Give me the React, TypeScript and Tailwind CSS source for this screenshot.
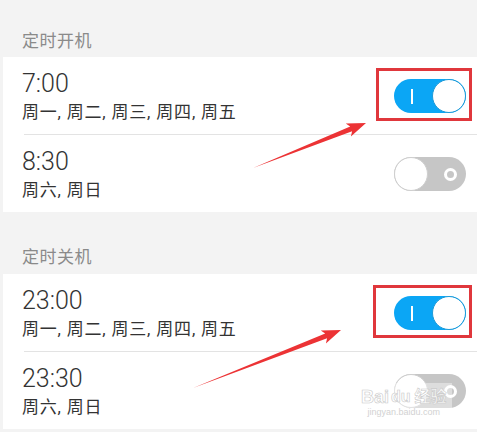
import React from "react";

const FONT = { fontFamily: '"Roboto", "Noto Sans CJK SC", sans-serif' };

function ToggleOn() {
  return (
    <div className="relative h-[34px] w-[72px] rounded-full bg-[#0ba6f5]">
      <div className="absolute left-[17px] top-[10px] h-[15px] w-[2px] bg-white" />
      <div className="absolute right-0 top-0 h-[34px] w-[34px] rounded-full border border-[#1c9ad8] bg-white" />
    </div>
  );
}

function ToggleOff() {
  return (
    <div className="relative h-[34px] w-[72px] rounded-full bg-[#c6c6c6]">
      <div className="absolute right-[9px] top-[11px] h-[13px] w-[13px] rounded-full border-[3px] border-white" />
      <div className="absolute left-0 top-0 h-[34px] w-[34px] rounded-full border border-[#cfcfcf] bg-white" />
    </div>
  );
}

function Row({ time, days, on, divider }: { time: string; days: string; on: boolean; divider?: boolean }) {
  return (
    <div className="flex flex-col">
      <div className="flex h-[77px] items-center pl-[19px] pr-[11px]">
        <div className="flex flex-1 flex-col">
          <div className="text-[25px] leading-[30px] font-light text-[#333]">{time}</div>
          <div className="mt-[3px] text-[17px] leading-[20px] tracking-[0.8px] text-[#333]">{days}</div>
        </div>
        {on ? <ToggleOn /> : <ToggleOff />}
      </div>
      {divider && <div className="ml-[21px] h-px bg-[#e3e3e3]" />}
    </div>
  );
}

function arrowPoints(tx: number, ty: number, hx: number, hy: number) {
  const dx = hx - tx;
  const dy = hy - ty;
  const len = Math.hypot(dx, dy);
  const ux = dx / len;
  const uy = dy / len;
  const nx = -uy;
  const ny = ux;
  const bx = hx - 19 * ux;
  const by = hy - 19 * uy;
  const pts = [
    [tx, ty],
    [bx + 2.6 * nx + 3 * ux, by + 2.6 * ny + 3 * uy],
    [bx + 7 * nx, by + 7 * ny],
    [hx, hy],
    [bx - 7 * nx, by - 7 * ny],
    [bx - 2.6 * nx + 3 * ux, by - 2.6 * ny + 3 * uy],
  ];
  return pts.map((p) => p.map((v) => v.toFixed(1)).join(",")).join(" ");
}

export default function App() {
  const days5 = "周一, 周二, 周三, 周四, 周五";
  const days2 = "周六, 周日";
  return (
    <div className="relative h-[432px] w-[477px] overflow-hidden bg-[#f3f3f3]" style={FONT}>
      <div className="flex h-[57px] items-end pb-[4px] pl-[22px] text-[17px] leading-[24px] tracking-[0.5px] text-[#8a8a8a]">定时开机</div>
      <div className="ml-[3px] bg-white">
        <Row time="7:00" days={days5} on divider />
        <Row time="8:30" days={days2} on={false} />
      </div>
      <div className="flex h-[62px] items-end pb-[5px] pl-[22px] text-[17px] leading-[24px] tracking-[0.5px] text-[#8a8a8a]">定时关机</div>
      <div className="ml-[3px] bg-white">
        <Row time="23:00" days={days5} on divider />
        <Row time="23:30" days={days2} on={false} />
      </div>

      {/* annotations */}
      <div className="absolute left-[376px] top-[68px] h-[53px] w-[96px] border-[3px] border-[#e0373c]" />
      <div className="absolute left-[373px] top-[285px] h-[53px] w-[99px] border-[3px] border-[#e0373c]" />
      <svg className="pointer-events-none absolute left-0 top-0" width="477" height="432">
        <polygon points={arrowPoints(253, 168, 366, 123)} fill="#ec3335" />
        <polygon points={arrowPoints(193, 388, 341, 330)} fill="#ec3335" />
      </svg>

      {/* watermark */}
      <div className="pointer-events-none absolute left-[356px] top-[383px] h-[36px] w-[96px] bg-white/40" />
      <div className="pointer-events-none absolute left-[361px] top-[387px] flex flex-col items-center">
        <div className="flex items-end gap-[2px] text-[18px] leading-[20px] font-bold text-white/80" style={{ WebkitTextStroke: "0.6px #c9c9c9", fontFamily: '"Liberation Sans", "Noto Sans CJK SC", sans-serif' }}>
          <span>Bai</span>
          <span className="text-[16px]">du</span>
          <span className="ml-[2px] text-[16px]">经验</span>
        </div>
        <div className="text-[9px] leading-[11px] text-[#d2d2d2]" style={{ fontFamily: '"Liberation Sans", sans-serif' }}>jingyan.baidu.com</div>
      </div>
    </div>
  );
}
